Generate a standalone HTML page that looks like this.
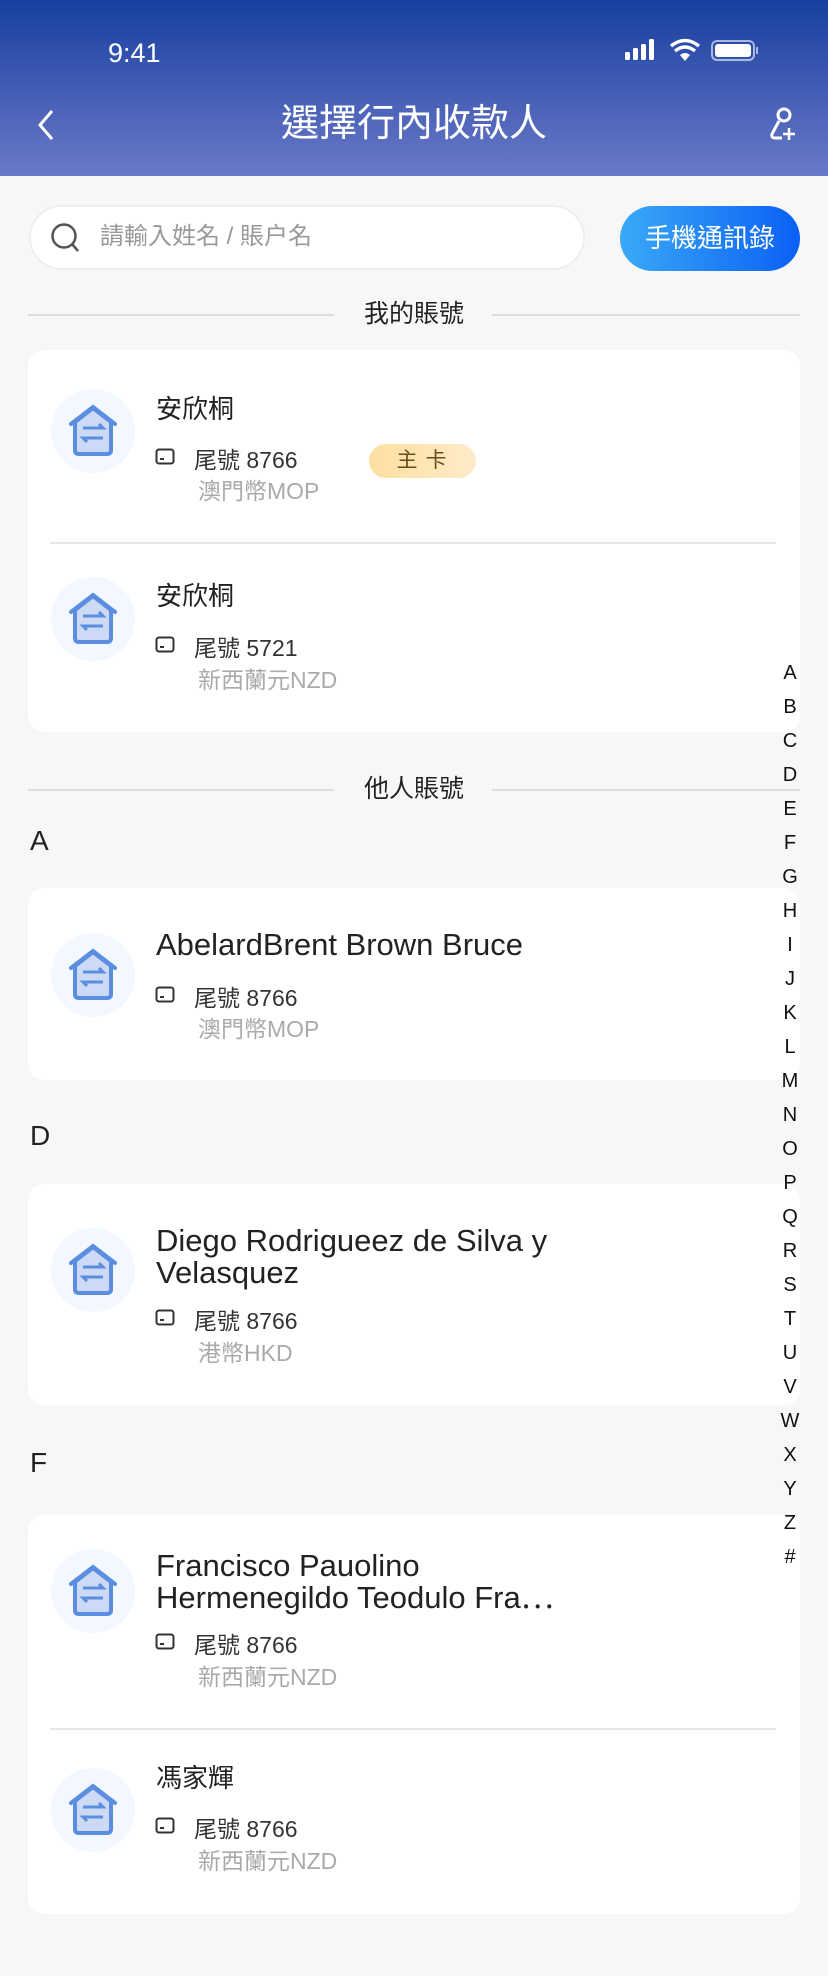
<!DOCTYPE html>
<html><head><meta charset="utf-8"><style>
*{margin:0;padding:0;box-sizing:border-box}
body{width:828px;height:1976px;background:#f7f7f7;position:relative;overflow:hidden;font-family:"Liberation Sans","Noto Sans CJK TC",sans-serif;color:#222}
.a{position:absolute;white-space:nowrap}
.hdr{position:absolute;left:0;top:0;width:828px;height:176px;background:linear-gradient(180deg,#163f9f 0%,#4a62b8 60%,#6a79c6 100%)}
.card{position:absolute;left:28px;width:772px;background:#fff;border-radius:16px}
.sec{position:absolute;font-size:25px;color:#222;width:828px;text-align:center;line-height:30px}
.line{position:absolute;height:2px;background:#ddd}
.idx{position:absolute;left:775px;width:30px;text-align:center;font-size:20px;color:#111;line-height:20px}
.gray{color:#aaa;font-size:23px}
.tail{font-size:23px;color:#333}
</style></head><body>
<div class="hdr"></div>
<div class="a" style="left:108px;top:38px;font-size:27px;color:#fff;line-height:30px">9:41</div>
<svg class="a" style="left:625px;top:38px" width="140" height="26" viewBox="0 0 140 26">
<rect x="0" y="14" width="5" height="8" rx="1.5" fill="#fff"/><rect x="8" y="10" width="5" height="12" rx="1.5" fill="#fff"/><rect x="16" y="6" width="5" height="16" rx="1.5" fill="#fff"/><rect x="24" y="1" width="5" height="21" rx="1.5" fill="#fff"/>
<path d="M46 8 Q60 -3 74 8" stroke="#fff" stroke-width="3.5" fill="none"/><path d="M50 13 Q60 5 70 13" stroke="#fff" stroke-width="3.5" fill="none"/><path d="M55 17 L60 23 L65 17 Q60 13 55 17Z" fill="#fff"/>
<rect x="87" y="3" width="42" height="19" rx="5" fill="none" stroke="#fff" stroke-opacity=".6" stroke-width="2"/><rect x="90" y="6" width="36" height="13" rx="3" fill="#fff"/><rect x="131" y="9" width="2" height="7" fill="#fff" fill-opacity=".6"/>
</svg>
<svg class="a" style="left:34px;top:108px" width="24" height="34"><path d="M18 3 L6 17 L18 31" stroke="#fff" stroke-width="3" fill="none"/></svg>
<div class="a" style="left:0;width:828px;text-align:center;top:101px;font-size:38px;color:#fff;line-height:46px">選擇行內收款人</div>
<svg class="a" style="left:768px;top:106px" width="30" height="36" viewBox="0 0 30 36"><circle cx="16" cy="9" r="6" stroke="#fff" stroke-width="3" fill="none"/><path d="M11 15 L4 28 Q3 32 7 32 L14 32" stroke="#fff" stroke-width="3" fill="none"/><path d="M21 22 V34 M15 28 H27" stroke="#fff" stroke-width="2.5"/></svg>

<div class="a" style="left:29px;top:205px;width:556px;height:65px;background:#fff;border:2px solid #eee;border-radius:33px"></div>
<svg class="a" style="left:50px;top:222px" width="32" height="32"><circle cx="14" cy="14" r="11.5" stroke="#555" stroke-width="2.5" fill="none"/><path d="M22 22 L28 29" stroke="#555" stroke-width="2.5"/></svg>
<div class="a" style="left:100px;top:222px;font-size:24px;color:#999;line-height:30px">請輸入姓名 / 賬户名</div>
<div class="a" style="left:620px;top:206px;width:180px;height:65px;border-radius:33px;background:linear-gradient(90deg,#3aa9f6,#0a60f5);color:#fff;font-size:26px;text-align:center;line-height:65px">手機通訊錄</div>

<div class="line" style="left:28px;width:306px;top:314px"></div><div class="line" style="left:492px;width:308px;top:314px"></div>
<div class="sec" style="top:299px">我的賬號</div>

<div class="card" style="top:350px;height:382px"></div>
<div class="line" style="left:50px;width:726px;top:542px;height:1.5px;background:#e6e6e6"></div>
<div class="card" style="top:888px;height:192px"></div>
<div class="card" style="top:1184px;height:221px"></div>
<div class="card" style="top:1515px;height:399px"></div>
<div class="line" style="left:50px;width:726px;top:1728px;height:1.5px;background:#e6e6e6"></div>

<div class="line" style="left:28px;width:306px;top:789px"></div><div class="line" style="left:492px;width:308px;top:789px"></div>
<div class="sec" style="top:774px">他人賬號</div>
<div class="a" style="left:30px;top:826px;font-size:28px;line-height:30px">A</div>
<div class="a" style="left:30px;top:1121px;font-size:28px;line-height:30px">D</div>
<div class="a" style="left:30px;top:1448px;font-size:28px;line-height:30px">F</div>

<svg width="0" height="0" style="position:absolute"><defs>
<g id="av"><circle cx="42" cy="42" r="42" fill="#f3f7ff"/><path d="M24 33 L42 19 L60 33 L60 61 Q60 65 56 65 L28 65 Q24 65 24 61Z" fill="#ccdaf5" stroke="#5b8ee0" stroke-width="4" stroke-linejoin="round"/><path d="M20 35 L42 18 L64 35" fill="none" stroke="#5b8ee0" stroke-width="4" stroke-linecap="round"/><path d="M32 39 H52 L48 35 M52 49 H32 L36 53" fill="none" stroke="#5b8ee0" stroke-width="3"/></g>
<g id="cd"><rect x="1.5" y="2.5" width="17" height="14" rx="2.5" fill="none" stroke="#333" stroke-width="2"/><path d="M5 12 H9" stroke="#333" stroke-width="2"/></g>
</defs></svg>

<svg class="a" style="left:51px;top:389px" width="84" height="84"><use href="#av"/></svg>
<div class="a" style="left:156px;top:393px;font-size:26px;line-height:32px">安欣桐</div>
<svg class="a" style="left:155px;top:447px" width="21" height="20"><use href="#cd"/></svg>
<div class="a tail" style="left:194px;top:445px;line-height:30px">尾號 8766</div>
<div class="a gray" style="left:198px;top:476px;line-height:30px">澳門幣MOP</div>
<div class="a" style="left:369px;top:444px;width:107px;height:34px;border-radius:17px;background:linear-gradient(90deg,#fddfa0,#fdebc9);color:#6b4a1a;font-size:21px;text-align:center;line-height:34px;letter-spacing:8px;padding-left:6px">主卡</div>

<svg class="a" style="left:51px;top:577px" width="84" height="84"><use href="#av"/></svg>
<div class="a" style="left:156px;top:580px;font-size:26px;line-height:32px">安欣桐</div>
<svg class="a" style="left:155px;top:635px" width="21" height="20"><use href="#cd"/></svg>
<div class="a tail" style="left:194px;top:633px;line-height:30px">尾號 5721</div>
<div class="a gray" style="left:198px;top:665px;line-height:30px">新西蘭元NZD</div>

<svg class="a" style="left:51px;top:933px" width="84" height="84"><use href="#av"/></svg>
<div class="a" style="left:156px;top:929px;font-size:31px;line-height:32px">AbelardBrent Brown Bruce</div>
<svg class="a" style="left:155px;top:985px" width="21" height="20"><use href="#cd"/></svg>
<div class="a tail" style="left:194px;top:983px;line-height:30px">尾號 8766</div>
<div class="a gray" style="left:198px;top:1014px;line-height:30px">澳門幣MOP</div>

<svg class="a" style="left:51px;top:1228px" width="84" height="84"><use href="#av"/></svg>
<div class="a" style="left:156px;top:1225px;font-size:31px;line-height:32px">Diego Rodrigueez de Silva y<br>Velasquez</div>
<svg class="a" style="left:155px;top:1308px" width="21" height="20"><use href="#cd"/></svg>
<div class="a tail" style="left:194px;top:1306px;line-height:30px">尾號 8766</div>
<div class="a gray" style="left:198px;top:1338px;line-height:30px">港幣HKD</div>

<svg class="a" style="left:51px;top:1549px" width="84" height="84"><use href="#av"/></svg>
<div class="a" style="left:156px;top:1550px;font-size:31px;line-height:32px">Francisco Pauolino<br>Hermenegildo Teodulo Fra⋯</div>
<svg class="a" style="left:155px;top:1632px" width="21" height="20"><use href="#cd"/></svg>
<div class="a tail" style="left:194px;top:1630px;line-height:30px">尾號 8766</div>
<div class="a gray" style="left:198px;top:1662px;line-height:30px">新西蘭元NZD</div>

<svg class="a" style="left:51px;top:1768px" width="84" height="84"><use href="#av"/></svg>
<div class="a" style="left:156px;top:1762px;font-size:26px;line-height:32px">馮家輝</div>
<svg class="a" style="left:155px;top:1816px" width="21" height="20"><use href="#cd"/></svg>
<div class="a tail" style="left:194px;top:1814px;line-height:30px">尾號 8766</div>
<div class="a gray" style="left:198px;top:1846px;line-height:30px">新西蘭元NZD</div>

<div class="idx" style="top:663px">A</div><div class="idx" style="top:697px">B</div><div class="idx" style="top:731px">C</div><div class="idx" style="top:765px">D</div><div class="idx" style="top:799px">E</div><div class="idx" style="top:833px">F</div><div class="idx" style="top:867px">G</div><div class="idx" style="top:901px">H</div><div class="idx" style="top:935px">I</div><div class="idx" style="top:969px">J</div><div class="idx" style="top:1003px">K</div><div class="idx" style="top:1037px">L</div><div class="idx" style="top:1071px">M</div><div class="idx" style="top:1105px">N</div><div class="idx" style="top:1139px">O</div><div class="idx" style="top:1173px">P</div><div class="idx" style="top:1207px">Q</div><div class="idx" style="top:1241px">R</div><div class="idx" style="top:1275px">S</div><div class="idx" style="top:1309px">T</div><div class="idx" style="top:1343px">U</div><div class="idx" style="top:1377px">V</div><div class="idx" style="top:1411px">W</div><div class="idx" style="top:1445px">X</div><div class="idx" style="top:1479px">Y</div><div class="idx" style="top:1513px">Z</div><div class="idx" style="top:1547px">#</div>
</body></html>
